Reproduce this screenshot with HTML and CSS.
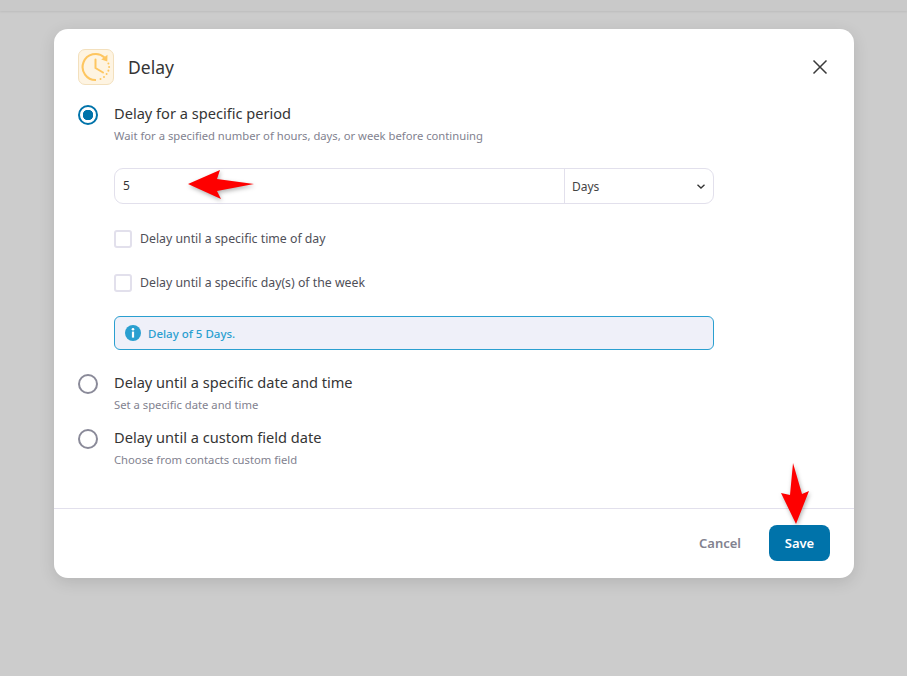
FILE: index.html
```html
<!DOCTYPE html>
<html lang="en">
<head>
    <meta charset="UTF-8">
    <meta name="viewport" content="width=device-width, initial-scale=1.0">
    <title>Delay</title>
    <link rel="stylesheet" href="styles.css">
</head>
<body>
    <div class="topbar"></div>
    <div class="modal">
        <div class="modal-head">
            <div class="head-icon">
                <svg width="32" height="32" viewBox="0 0 32 32" fill="none">
                    <path d="M16 29 A13 13 0 1 1 24.5 6.5" stroke="#fec660" stroke-width="2.1"/>
                    <path d="M27.5 3.8 L27.3 10.4 L21.2 8.4 Z" fill="#fec660"/>
                    <path d="M28.4 12.5 v.1 M29.1 16 v.1 M28.4 19.6 v.1 M26.6 23 v.1 M24 25.9 v.1 M20.5 28 v.1" stroke="#fec660" stroke-width="2" stroke-linecap="round"/>
                    <path d="M15.5 8.5 V17 L23 21.5" stroke="#fec660" stroke-width="2" stroke-linecap="round"/>
                </svg>
            </div>
            <h2>Delay</h2>
            <svg class="close" width="16" height="16" viewBox="0 0 16 16">
                <path d="M1.5 1.5 L14.5 14.5 M14.5 1.5 L1.5 14.5" stroke="#3a3a3a" stroke-width="1.5"/>
            </svg>
        </div>

        <div class="modal-body">
            <div class="option">
                <span class="radio checked"></span>
                <div>
                    <div class="option-title">Delay for a specific period</div>
                    <div class="option-desc">Wait for a specified number of hours, days, or week before continuing</div>
                </div>
            </div>

            <div class="period">
                <div class="field">
                    <div class="field-value">5</div>
                    <div class="field-unit">
                        <span>Days</span>
                        <svg width="8" height="5" viewBox="0 0 8 5" fill="none">
                            <path d="M.5 .7 L4 4 L7.5 .7" stroke="#333" stroke-width="1.3"/>
                        </svg>
                    </div>
                </div>
                <label class="check"><span class="box"></span><span class="check-text">Delay until a specific time of day</span></label>
                <label class="check"><span class="box"></span><span class="check-text">Delay until a specific day(s) of the week</span></label>
                <div class="notice">
                    <svg width="16" height="16" viewBox="0 0 16 16">
                        <circle cx="8" cy="8" r="8" fill="#2a9fd0"/>
                        <circle cx="8" cy="4.3" r="1.3" fill="#fff"/>
                        <rect x="6.9" y="6.6" width="2.2" height="6" fill="#fff"/>
                    </svg>
                    <span>Delay of 5 Days.</span>
                </div>
            </div>

            <div class="option option-second">
                <span class="radio"></span>
                <div>
                    <div class="option-title">Delay until a specific date and time</div>
                    <div class="option-desc">Set a specific date and time</div>
                </div>
            </div>
            <div class="option option-third">
                <span class="radio"></span>
                <div>
                    <div class="option-title">Delay until a custom field date</div>
                    <div class="option-desc">Choose from contacts custom field</div>
                </div>
            </div>
        </div>

        <div class="modal-foot">
            <button class="btn-cancel">Cancel</button>
            <button class="btn-save">Save</button>
        </div>
    </div>

    <!-- annotation arrows -->
    <svg class="arrow arrow-left" width="68" height="32" viewBox="0 0 68 32">
        <path d="M0 15 L32 1 L29 10 L66 15 L29 22 L33 30 Z" fill="#fe0000"/>
    </svg>
    <svg class="arrow arrow-down" width="32" height="64" viewBox="0 0 32 64">
        <path d="M14 1 L23 32 L30 29 L17 62 L2 31 L11 33 Z" fill="#fe0000"/>
    </svg>
</body>
</html>
```

FILE: styles.css
```css
/* Delay dialog */
html, body {
    height: 100%;
}

body {
    font-family: 'Noto Sans', sans-serif;
    background-color: #cccccc;
    color: #353535;
    margin: 0;
    padding: 0;
    overflow: hidden;
}

.topbar {
    height: 11px;
    background-color: #c9c9c9;
    box-shadow: 0 1px 2px rgba(0, 0, 0, 0.08);
}

.modal {
    width: 800px;
    height: 549px;
    margin: 18px 0 0 54px;
    background-color: #fff;
    border-radius: 14px;
    box-shadow: 0 4px 16px rgba(0, 0, 0, 0.12);
    display: flex;
    flex-direction: column;
}

.modal-head {
    display: flex;
    align-items: center;
    gap: 14px;
    padding: 20px 26px 0 24px;
}

.head-icon {
    width: 34px;
    height: 34px;
    background-color: #fef4e2;
    border: 1px solid #f3e0bd;
    border-radius: 7px;
    display: flex;
    align-items: center;
    justify-content: center;
}

.modal-head h2 {
    font-size: 17.5px;
    font-weight: 400;
    margin: 0;
    flex: 1;
    line-height: 36px;
}

.modal-body {
    flex: 1;
    padding: 17px 24px 0;
}

.option {
    display: flex;
    gap: 16px;
}

.option-second {
    margin-top: 21px;
}

.option-third {
    margin-top: 12px;
}

.radio {
    width: 20px;
    height: 20px;
    box-sizing: border-box;
    border: 2px solid #8a8a99;
    border-radius: 50%;
    margin-top: 3px;
    flex-shrink: 0;
}

.radio.checked {
    border-color: #0073aa;
    background: radial-gradient(circle, #0073aa 0 5px, #fff 5.5px);
}

.option-title {
    font-size: 14.6px;
    line-height: 22px;
    font-weight: 400;
}

.option-desc {
    font-size: 11.25px;
    line-height: 18px;
    margin-top: 3px;
    color: #82828f;
}

.period {
    margin: 23px 0 0 36px;
    width: 600px;
}

.field {
    height: 36px;
    box-sizing: border-box;
    border: 1px solid #e2e0ec;
    border-radius: 9px;
    display: flex;
    font-size: 12px;
}

.field-value {
    flex: 1;
    padding-left: 8px;
    line-height: 33px;
}

.field-unit {
    width: 149px;
    box-sizing: border-box;
    border-left: 1px solid #e2e0ec;
    padding: 0 8px 0 7px;
    display: flex;
    align-items: center;
    justify-content: space-between;
    color: #444;
}

.check {
    display: flex;
    align-items: center;
    gap: 8px;
    font-size: 12.3px;
    color: #4f4f58;
    height: 18px;
    margin-top: 26px;
}

.check-text {
    margin-top: -2px;
}

.box {
    width: 18px;
    height: 18px;
    box-sizing: border-box;
    border: 2px solid #e2e0ec;
    border-radius: 3px;
}

.notice {
    margin-top: 24px;
    height: 34px;
    box-sizing: border-box;
    border: 1px solid #2a9fd0;
    border-radius: 6px;
    background-color: #eff0f9;
    color: #2a9fd0;
    font-size: 11.5px;
    font-weight: 500;
    display: flex;
    align-items: center;
    gap: 7px;
    padding-left: 10px;
}

.modal-foot {
    height: 69px;
    border-top: 1px solid #e2e0ec;
    display: flex;
    align-items: center;
    justify-content: flex-end;
    gap: 14px;
    padding: 0 24px;
}

button {
    font-family: 'Noto Sans', sans-serif;
    font-size: 13px;
    font-weight: 600;
    border: none;
    height: 36px;
    border-radius: 8px;
    margin-bottom: 1px;
}

.btn-cancel {
    background: none;
    color: #82828f;
    padding: 0 14px;
}

.btn-save {
    width: 61px;
    background-color: #0073aa;
    color: #fff;
}

.arrow {
    position: absolute;
    filter: drop-shadow(1px 2px 2px rgba(0, 0, 0, 0.3));
}

.arrow-left {
    left: 188px;
    top: 169px;
}

.arrow-down {
    left: 779px;
    top: 462px;
}
```
